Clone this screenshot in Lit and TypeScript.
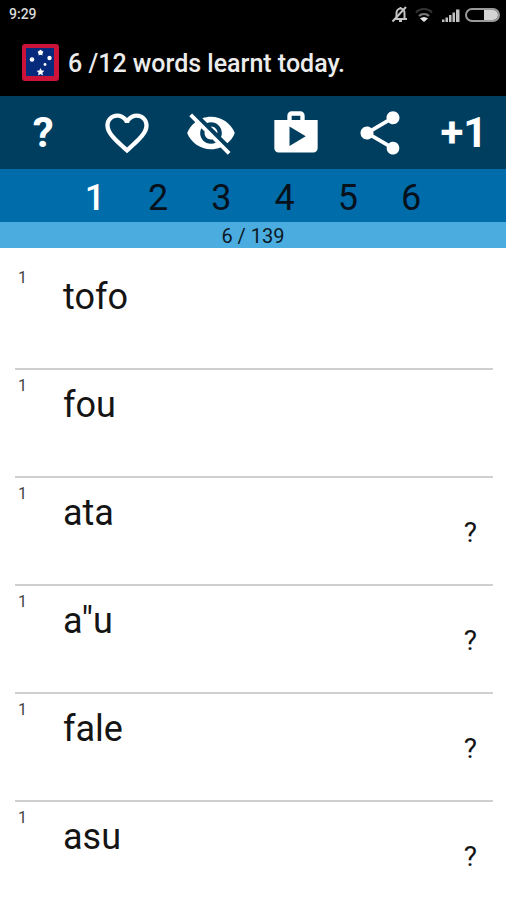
import { LitElement, html, css, svg, nothing } from "lit";
import { customElement, state } from "lit/decorators.js";

interface Word {
  text: string;
  level: number;
  hint: boolean;
}

const WORDS: Word[] = [
  { text: "tofo", level: 1, hint: false },
  { text: "fou", level: 1, hint: false },
  { text: "ata", level: 1, hint: true },
  { text: 'a"u', level: 1, hint: true },
  { text: "fale", level: 1, hint: true },
  { text: "asu", level: 1, hint: true },
];

const ICONS = {
  heart: svg`<path d="M16.5 3c-1.74 0-3.41.81-4.5 2.09C10.91 3.81 9.24 3 7.5 3 4.42 3 2 5.42 2 8.5c0 3.78 3.4 6.86 8.55 11.54L12 21.35l1.45-1.32C18.6 15.36 22 12.28 22 8.5 22 5.42 19.58 3 16.5 3zm-4.4 15.55l-.1.1-.1-.1C7.14 14.24 4 11.39 4 8.5 4 6.5 5.5 5 7.5 5c1.54 0 3.04.99 3.57 2.36h1.87C13.46 5.99 14.96 5 16.5 5c2 0 3.5 1.5 3.5 3.5 0 2.89-3.14 5.74-7.9 10.05z"/>`,
  hidden: svg`<path d="M12 7c2.76 0 5 2.24 5 5 0 .65-.13 1.26-.36 1.83l2.92 2.92c1.51-1.26 2.7-2.89 3.43-4.75-1.73-4.39-6-7.5-11-7.5-1.4 0-2.74.25-3.98.7l2.16 2.16C10.74 7.13 11.35 7 12 7zM2 4.27l2.28 2.28.46.46C3.08 8.3 1.78 10.02 1 12c1.73 4.39 6 7.5 11 7.5 1.55 0 3.03-.3 4.38-.84l.42.42L19.73 22 21 20.73 3.27 3 2 4.27zM7.53 9.8l1.55 1.55c-.05.21-.08.43-.08.65 0 1.66 1.34 3 3 3 .22 0 .44-.03.65-.08l1.55 1.55c-.67.33-1.41.53-2.2.53-2.76 0-5-2.24-5-5 0-.79.2-1.53.53-2.2zm4.31-.78l3.15 3.15.02-.16c0-1.66-1.34-3-3-3l-.17.01z"/>`,
  shop: svg`<path d="M16 6V4c0-1.11-.89-2-2-2h-4c-1.11 0-2 .89-2 2v2H2v13c0 1.11.89 2 2 2h16c1.11 0 2-.89 2-2V6h-6zm-6-2h4v2h-4V4zM9 18V9l7.5 4.5L9 18z"/>`,
  share: svg`<path d="M18 16.08c-.76 0-1.44.3-1.96.77L8.91 12.7c.05-.23.09-.46.09-.7s-.04-.47-.09-.7l7.05-4.11c.54.5 1.25.81 2.04.81 1.66 0 3-1.34 3-3s-1.34-3-3-3-3 1.34-3 3c0 .24.04.47.09.7L8.04 9.81C7.5 9.31 6.79 9 6 9c-1.66 0-3 1.34-3 3s1.34 3 3 3c.79 0 1.5-.31 2.04-.81l7.12 4.16c-.05.21-.08.43-.08.65 0 1.61 1.31 2.92 2.92 2.92 1.61 0 2.92-1.31 2.92-2.92s-1.31-2.92-2.92-2.92z"/>`,
};

@customElement("status-bar")
class StatusBar extends LitElement {
  static styles = css`
    :host {
      display: flex;
      justify-content: space-between;
      align-items: center;
      height: 28px;
      padding: 0 6px 0 9px;
      color: #d8d8d8;
      font-size: 14px;
      font-weight: 500;
    }
    .icons {
      display: block;
      width: 110px;
      height: 20px;
    }
  `;

  render() {
    return html`
      <span>9:29</span>
      <svg class="icons" viewBox="0 0 110 20" role="img" aria-label="Muted, Wi-Fi, signal, battery">
        <g fill="none" stroke="#c4c4c4" stroke-width="2">
          <path d="M4 15h13M6.500 14V9a4 4.500 0 0 1 8 0v5M9 17h3M10.500 4.500V3" />
          <path d="M2.500 17.500 16 3" />
        </g>
        <g fill="none" stroke-width="2">
          <path d="M26 8.500a11 11 0 0 1 16 0" stroke="#343434" />
          <path d="M29 12a7 7 0 0 1 10 0" stroke="#7c7c7c" />
        </g>
        <path d="M30 14.500a6 6 0 0 1 8 0L34 18z" fill="#e4e4e4" />
        <path
          d="M52 15.500h2.500v2.500H52zM55.500 13.500H58V18h-2.500zM59 11h2.500v7H59zM62.500 8.500H65V18h-2.500zM66 5.500h3.500V18H66z"
          fill="#c0c0c0"
        />
        <rect x="76" y="5" width="33" height="12" rx="6" fill="none" stroke="#9a9a9a" stroke-width="2" />
        <path d="M94 6h9a5 5 0 0 1 0 10h-9z" fill="#d4d4d4" />
      </svg>
    `;
  }
}

@customElement("word-row")
class WordRow extends LitElement {
  static properties = { word: { attribute: false } };
  declare word: Word;

  static styles = css`
    :host {
      display: grid;
      grid-template-columns: 48px 1fr auto;
      box-sizing: border-box;
      height: 108px;
      border-bottom: 2px solid #cfcfcf;
      color: #141414;
    }
    .level {
      padding: 6px 0 0 3px;
      font-size: 16px;
      line-height: 20px;
      color: #444;
    }
    .text {
      padding-top: 14px;
      font-size: 36px;
      line-height: 42px;
    }
    .hint {
      align-self: start;
      margin: 38px 16px 0 0;
      padding: 0;
      border: 0;
      background: none;
      color: inherit;
      font: inherit;
      font-size: 28px;
      line-height: 34px;
    }
  `;

  render() {
    return html`
      <span class="level">${this.word.level}</span>
      <span class="text">${this.word.text}</span>
      ${this.word.hint
        ? html`<button class="hint" aria-label="Show meaning of ${this.word.text}">?</button>`
        : nothing}
    `;
  }
}

@customElement("app-root")
class AppRoot extends LitElement {
  @state() level = 1;

  static styles = css`
    :host {
      display: block;
      min-height: 100vh;
      overflow: hidden;
      background: #fff;
      font-family: Roboto, sans-serif;
    }
    header {
      background: #000;
      color: #ececec;
    }
    .title {
      display: flex;
      align-items: center;
      gap: 9px;
      height: 68px;
      padding-left: 22px;
    }
    .flag {
      width: 37px;
      height: 37px;
    }
    h1 {
      margin: 0;
      padding-top: 4px;
      font-size: 25px;
      line-height: 32px;
      font-weight: 500;
    }
    .tools {
      display: grid;
      grid-template-columns: repeat(6, 1fr);
      height: 73px;
      padding-left: 1px;
      background: #003e60;
    }
    button {
      margin: 0;
      padding: 0;
      border: 0;
      background: none;
      font: inherit;
      cursor: pointer;
    }
    .tool {
      display: flex;
      align-items: center;
      justify-content: center;
      color: #fff;
      font-size: 42px;
      font-weight: 700;
    }
    .tool svg {
      width: 52px;
      height: 52px;
      fill: currentColor;
    }
    .levels {
      display: grid;
      grid-template-columns: repeat(6, 1fr);
      height: 53px;
      padding: 0 12.5%;
      background: #006ca9;
    }
    .lvl {
      padding-top: 4px;
      color: #06111c;
      font-size: 36px;
    }
    .lvl.on {
      color: #fff;
      font-weight: 500;
    }
    .count {
      margin: 0;
      padding-top: 3px;
      background: #4bacdf;
      color: #0b1a26;
      font-size: 20px;
      line-height: 23px;
      text-align: center;
    }
    main {
      padding: 14px 13px 0 15px;
    }
  `;

  private tool(label: string, icon: unknown) {
    return html`<button class="tool" aria-label=${label}>
      <svg viewBox="0 0 24 24" aria-hidden="true">${icon}</svg>
    </button>`;
  }

  render() {
    return html`
      <header>
        <status-bar></status-bar>
        <div class="title">
          <svg class="flag" viewBox="0 0 37 37" aria-hidden="true">
            <rect width="37" height="37" rx="3" fill="#cb1238" />
            <rect x="4" y="4" width="28" height="28" fill="#062a7c" />
            <g fill="#fff">
              <circle cx="18.500" cy="8.500" r="2.300" />
              <path d="M18.500 5.500l1 1.800 2.100.4-1.400 1.600.3 2.200-2-1-2 1 .3-2.200-1.400-1.600 2.100-.4z" />
              <circle cx="10" cy="15.500" r="2.300" />
              <circle cx="27.500" cy="14" r="2.200" />
              <circle cx="23" cy="20.500" r="1.400" />
              <path d="M18.500 24l1.200 2.500 2.600.3-1.900 1.900.5 2.700-2.400-1.300-2.400 1.300.5-2.700-1.900-1.900 2.600-.3z" />
            </g>
          </svg>
          <h1>6 /12 words learnt today.</h1>
        </div>
      </header>
      <div class="tools" role="toolbar">
        <button class="tool">?</button>
        ${this.tool("Favourites", ICONS.heart)} ${this.tool("Hide words", ICONS.hidden)}
        ${this.tool("Shop", ICONS.shop)} ${this.tool("Share", ICONS.share)}
        <button class="tool">+1</button>
      </div>
      <nav class="levels">
        ${[1, 2, 3, 4, 5, 6].map(
          (n) => html`<button class="lvl ${n === this.level ? "on" : ""}" @click=${() => (this.level = n)}>${n}</button>`
        )}
      </nav>
      <p class="count">6 / 139</p>
      <main>${WORDS.map((w) => html`<word-row .word=${w}></word-row>`)}</main>
    `;
  }
}
